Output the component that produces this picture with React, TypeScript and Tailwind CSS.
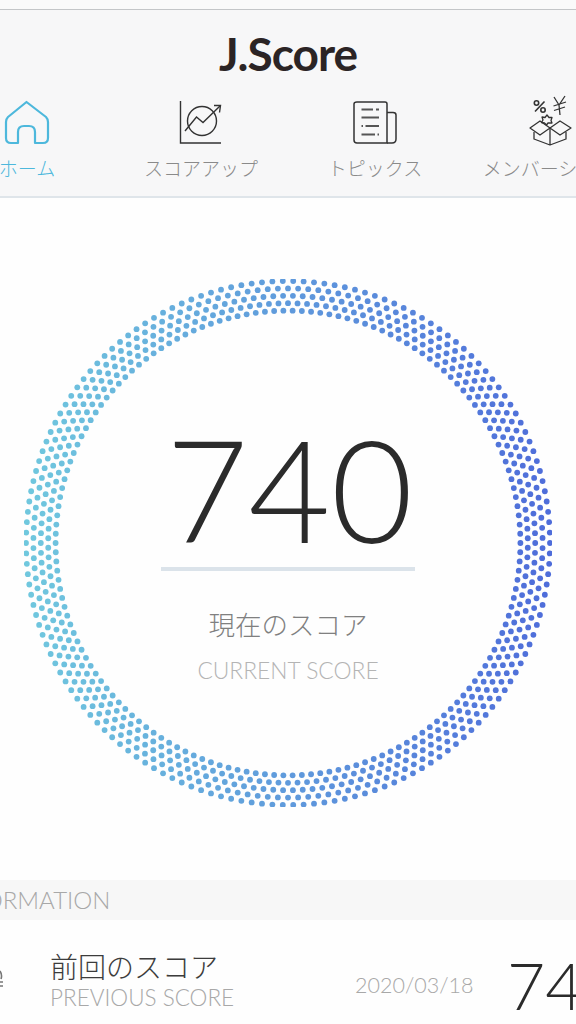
const rows = [262, 254.6, 247.2, 239.8, 232.4]
const DOTS = 158

function ringColor(x: number) {
  const t = Math.min(1, Math.max(0, (x - 24) / 528))
  const r = Math.round(112 + (78 - 112) * t)
  const g = Math.round(200 + (108 - 200) * t)
  const b = Math.round(222 + (218 - 222) * t)
  return `rgb(${r},${g},${b})`
}

function ScoreRing() {
  const dots: { x: number; y: number }[] = []
  rows.forEach((radius, row) => {
    for (let i = 0; i < DOTS; i++) {
      const a = ((i + (row % 2) * 0.5) / DOTS) * Math.PI * 2
      dots.push({ x: 264 + radius * Math.cos(a), y: 264 + radius * Math.sin(a) })
    }
  })
  return (
    <svg viewBox="0 0 528 528" className="col-start-1 row-start-1 w-[528px] h-[528px]">
      {dots.map((d, i) => (
        <circle key={i} cx={d.x} cy={d.y} r={2.9} fill={ringColor(d.x + 24)} />
      ))}
    </svg>
  )
}

function HomeIcon() {
  return (
    <svg viewBox="0 0 46 46" className="w-[46px] h-[46px]" fill="none" stroke="#4db8dc" strokeWidth="2.2" strokeLinejoin="round">
      <path d="M22.5 3 L4 18 Q2 20 2 23 V39 Q2 44 7 44 H14 V33 Q14 27 20 27 H25 Q31 27 31 33 V44 H39 Q44 44 44 39 V23 Q44 20 42 18 Z" />
    </svg>
  )
}

function ChartIcon() {
  return (
    <svg viewBox="0 0 46 46" className="w-[46px] h-[46px]" fill="none" stroke="#333" strokeWidth="1.4">
      <path d="M2.5 2 V44 H43" />
      <circle cx="24" cy="22" r="14.5" />
      <path d="M7 32 L18.5 18 L25 23.5 L42 7" />
      <path d="M36 6.5 H42.5 L41.5 13.5" />
    </svg>
  )
}

function TopicsIcon() {
  return (
    <svg viewBox="0 0 46 46" className="w-[46px] h-[46px]" fill="none" stroke="#333" strokeWidth="1.5">
      <path d="M5 3 H33 Q35 3 35 5 V44 H5 Q2 44 2 41 V5 Q2 3 5 3 Z" />
      <path d="M35 13.5 H41 Q44 13.5 44 16 V40 Q44 44 40 44 H35" />
      <path d="M9.5 10.5 H21 M24 10.5 H27 M9.5 18.5 H27 M9.5 27 H11 M13.5 27 H27 M9.5 35.5 H23 M25.5 35.5 H27" strokeWidth="1.8" stroke="#555" />
    </svg>
  )
}

function MemberIcon() {
  return (
    <svg viewBox="0 0 46 52" className="w-[46px] h-[52px] -mt-[4px] -mb-[2px]" fill="none" stroke="#333" strokeWidth="1.3" strokeLinejoin="round">
      <circle cx="10.5" cy="8" r="2.2" strokeWidth="1.6" />
      <circle cx="17" cy="15" r="2.2" strokeWidth="1.6" />
      <path d="M18.5 6.5 L9 16.5" strokeWidth="1.6" />
      <path d="M28 2 L33 10 L39 1 M33 10 L34 20 M27.5 11 L40 7 M28 15.5 L39 12" />
      <path d="M21 20 L23 22.5 L26 22.5 L25 25.5 L26 28 L22 28 L20.5 30 L18.5 28 L15.5 27.5 L17 25 L16 22 L19 22.5 Z" />
      <path d="M24 33 L14 26 L4 33 L14 40 L24 33 L34 26 L45 33 L34 40 Z" />
      <path d="M8 37 V44 L24 50 L40 44 V37 M24 33 V50" />
    </svg>
  )
}

const navItems = [
  { label: "ホーム", icon: <HomeIcon />, active: true },
  { label: "スコアアップ", icon: <ChartIcon />, active: false },
  { label: "トピックス", icon: <TopicsIcon />, active: false },
  { label: "メンバーシップ", icon: <MemberIcon />, active: false },
]

const latoJp = "font-['Lato','Noto_Sans_CJK_JP',sans-serif]"

export default function App() {
  return (
    <div className={`w-[576px] h-[1024px] overflow-hidden bg-[#fefefe] ${latoJp}`}>
      <div className="h-[9px] bg-[#fafafa]" />
      <header className="h-[189px] bg-[#f7f7f8] border-t border-t-[#c4c6c8] border-b-2 border-b-[#dfe5ea]">
        <h1 className="h-[89px] pt-[17px] text-center text-[46px] leading-[54px] font-bold tracking-[-1px] text-[#2b2425] font-['Lato',sans-serif]">
          J.Score
        </h1>
        <nav className="flex -ml-[60px]">
          {navItems.map((item) => (
            <div key={item.label} className="w-[174px] shrink-0 flex flex-col items-center">
              <div className="h-[46px] flex items-center justify-center">{item.icon}</div>
              <span
                className={`mt-[11px] text-[19px] leading-[26px] font-light whitespace-nowrap ${
                  item.active ? "text-[#4db8dc]" : "text-[#8a8a8a]"
                }`}
              >
                {item.label}
              </span>
            </div>
          ))}
        </nav>
      </header>

      <section className="h-[683px] pt-[81px] flex justify-center">
        <div className="grid w-[528px] h-[528px]">
          <ScoreRing />
          <div className="col-start-1 row-start-1 flex flex-col items-center pt-[132px]">
            <div className="h-[154px] pl-[3px] text-[142px] leading-[154px] font-light text-[#2b2b2b]">740</div>
            <div className="mt-[2px] w-[254px] h-[4px] bg-[#dbe3ea]" />
            <div className="mt-[36px] text-[26.5px] leading-[36px] font-light text-[#808080]">現在のスコア</div>
            <div className="mt-[13px] text-[22.8px] leading-[28px] font-light text-[#b4b4b4]">CURRENT SCORE</div>
          </div>
        </div>
      </section>

      <div className="h-[40px] bg-[#f7f7f7] flex items-center -ml-[54px] mt-[-1px] text-[24px] font-light text-[#a8a8a8] whitespace-nowrap">
        INFORMATION
      </div>

      <div className="flex items-center h-[103px] pt-[20px] whitespace-nowrap">
        <svg viewBox="0 0 3 18" className="w-[3px] h-[18px] shrink-0 mt-[-6px]" fill="none" stroke="#777" strokeWidth="1.6">
          <path d="M0 1 Q2.5 5 1 9 M0 12 H3 M0 16 H3" />
        </svg>
        <div className="w-[352px] shrink-0 pl-[47px]">
          <div className="text-[28px] leading-[32px] font-light text-[#3c3c3c]">前回のスコア</div>
          <div className="text-[22.5px] leading-[30px] font-light text-[#a8a8a8]">PREVIOUS SCORE</div>
        </div>
        <div className="text-[21.5px] mt-[8px] font-light text-[#a8a8a8] w-[152px] shrink-0">2020/03/18</div>
        <div className="text-[66px] leading-[72px] mt-[6px] font-light text-[#2b2b2b] shrink-0">740</div>
      </div>
    </div>
  )
}
